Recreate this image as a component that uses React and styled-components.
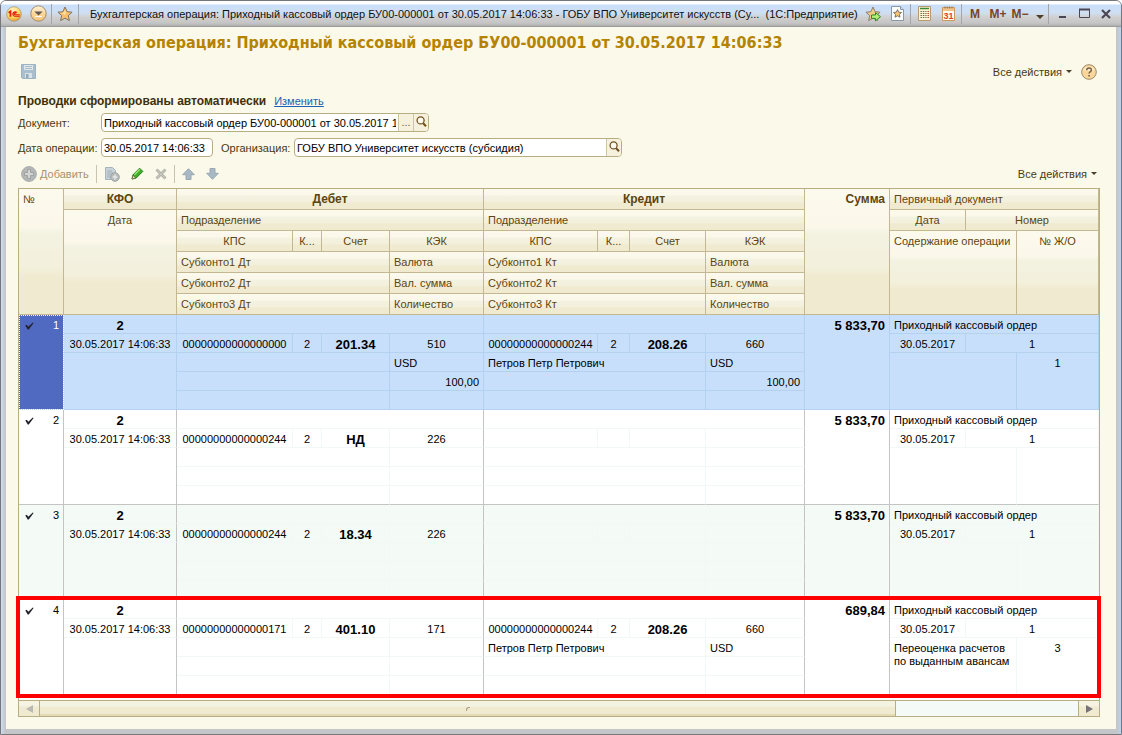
import React from 'react'
import styled, { createGlobalStyle, ThemeProvider } from 'styled-components'

const theme = {
  page: '#fbf9ea',
  border: '#b9ad84',
  headerLine: '#c3b891',
  headerText: '#5c4510',
  label: '#4a3a10',
  title: '#b58300',
  groupLine: '#c4c4c4',
  cellLine: '#f1f8f6',
  selected: '#c8dffb',
  selectedLine: '#b4d2f0',
  zebra: '#f4faf6',
  cursor: '#5069c1'
}

const columns = [45, 113, 116, 29, 68, 94, 114, 32, 76, 99, 85, 76, 51, 82]

const records = [
  {
    id: 1,
    debit: { kps: '00000000000000000', k: '2', account: '201.34', kek: '510', currency: 'USD', amount: '100,00' },
    credit: {
      kps: '00000000000000244',
      k: '2',
      account: '208.26',
      kek: '660',
      subconto: 'Петров Петр Петрович',
      currency: 'USD',
      amount: '100,00'
    },
    sum: '5 833,70',
    journal: '1'
  },
  {
    id: 2,
    debit: { kps: '00000000000000244', k: '2', account: 'НД', kek: '226' },
    credit: {},
    sum: '5 833,70'
  },
  {
    id: 3,
    debit: { kps: '00000000000000244', k: '2', account: '18.34', kek: '226' },
    credit: {},
    sum: '5 833,70'
  },
  {
    id: 4,
    debit: { kps: '00000000000000171', k: '2', account: '401.10', kek: '171' },
    credit: {
      kps: '00000000000000244',
      k: '2',
      account: '208.26',
      kek: '660',
      subconto: 'Петров Петр Петрович',
      currency: 'USD'
    },
    sum: '689,84',
    content: 'Переоценка расчетов по выданным авансам',
    journal: '3'
  }
]

/* ---------- icons ---------- */

const starPath = 'M8 1l2.1 4.7 5 .5-3.8 3.4 1.1 5L8 12.1l-4.4 2.5 1.1-5L.9 6.2l5-.5z'

const LogoIcon = () => (
  <svg width='16' height='16' viewBox='0 0 16 16'>
    <defs>
      <radialGradient id='logo' cx='0.4' cy='0.25' r='0.8'>
        <stop offset='0' stopColor='#fff6c8' />
        <stop offset='0.6' stopColor='#fbd75c' />
        <stop offset='1' stopColor='#e0912c' />
      </radialGradient>
    </defs>
    <circle cx='8' cy='8' r='7.3' fill='url(#logo)' stroke='#a99a84' strokeWidth='0.8' />
    <path d='M2.6 6.8l1.9-1.4v5.4' fill='none' stroke='#e01b10' strokeWidth='1.7' />
    <path
      d='M10.9 6.6a2.3 2.3 0 1 0-2 3.7h4.8M9.9 7.8a.9.9 0 1 0-1 .9h4.8'
      fill='none'
      stroke='#e01b10'
      strokeWidth='1.1'
    />
  </svg>
)

const MenuIcon = () => (
  <svg width='17' height='17' viewBox='0 0 17 17'>
    <defs>
      <linearGradient id='menu' x1='0' y1='0' x2='0' y2='1'>
        <stop offset='0' stopColor='#fff4dc' />
        <stop offset='0.5' stopColor='#fbd79a' />
        <stop offset='1' stopColor='#f5c478' />
      </linearGradient>
    </defs>
    <circle cx='8.5' cy='8.5' r='7.7' fill='url(#menu)' stroke='#a08a6c' />
    <path d='M4.3 6.5h8.4L8.5 10.5z' fill='#5e5a5a' />
    <path d='M5 11.5h7' stroke='#fff' />
  </svg>
)

const StarIcon = () => (
  <svg width='16' height='16' viewBox='0 0 16 16'>
    <path d={starPath} fill='#fbbf68' stroke='#7d7468' strokeWidth='1' />
    <path d='M8 3.6l1.3 3L8 9 4.4 7l2.5-.4z' fill='#fddca0' />
  </svg>
)

const StarAddIcon = () => (
  <svg width='17' height='16' viewBox='0 0 17 16'>
    <path d={starPath} fill='#f3c889' stroke='#8a7f72' strokeWidth='1' />
    <path d='M6.5 9h4V6.6l5 4.1-5 4.1v-2.4h-4z' fill='#b5ee78' stroke='#2c8a1e' />
  </svg>
)

const PageStarIcon = () => (
  <svg width='13' height='15' viewBox='0 0 13 15'>
    <path d='M.5.5h9l3 3v11H.5z' fill='#fbfdff' stroke='#8799a8' />
    <path d='M9.5.5v3h3' fill='#dbe4ec' stroke='#8799a8' />
    <path
      d='M6.5 3.6l1.2 2.6 2.8.3-2.1 1.9.6 2.8-2.5-1.4L4 11.2l.6-2.8-2.1-1.9 2.8-.3z'
      fill='#f9c774'
      stroke='#655c50'
      strokeWidth='0.8'
    />
  </svg>
)

const CalculatorIcon = () => (
  <svg width='13' height='15' viewBox='0 0 13 15'>
    <path d='M.5.5h12v14H.5z' fill='#fff3d8' stroke='#b89a70' />
    <path d='M2 2.5h9' stroke='#3a8a34' strokeWidth='1.6' />
    <path d='M2.5 5.5h6M2.5 7.5h6M2.5 9.5h6M2.5 11.5h6' stroke='#5a6a3a' strokeDasharray='1.4 1' />
    <path d='M9.5 5.5h1.5M9.5 7.5h1.5M9.5 9.5h1.5M9.5 11.5h1.5' stroke='#c0502a' />
  </svg>
)

const CalendarIcon = () => (
  <svg width='13' height='15' viewBox='0 0 13 15'>
    <path d='M.5 1.5h12v13H.5z' fill='#fffdf6' stroke='#c79a62' />
    <path d='M1 2h11v3H1z' fill='#f3c48a' />
    <path d='M3 .5v2M5.3.5v2M7.6.5v2M10 .5v2' stroke='#99704a' />
    <text
      x='6.5'
      y='13'
      textAnchor='middle'
      fontSize='9'
      fontWeight='bold'
      fontFamily='Liberation Sans, sans-serif'
      fill='#dc4226'
    >
      31
    </text>
  </svg>
)

const SaveIcon = () => (
  <svg width='15' height='15' viewBox='0 0 15 15'>
    <path d='M.5.5h14v14h-13l-1-1z' fill='#a9bfce' stroke='#9db3c2' />
    <path d='M3 1h9v5H3z' fill='#dfe7ea' />
    <path d='M4 2.5h7M4 4.5h7' stroke='#a9bfce' />
    <path d='M4 9h7v5H4z' fill='#d9e2e6' />
    <path d='M5 10h2.5v4H5z' fill='#8fa9ba' />
  </svg>
)

const HelpIcon = () => (
  <svg width='16' height='16' viewBox='0 0 16 16'>
    <circle cx='8' cy='8' r='7.3' fill='#fbd69a' stroke='#9c8a6c' />
    <path d='M2.5 6a6 6 0 0 1 11 0c-3 1.5-8 1.5-11 0z' fill='#fdebc8' />
    <path d='M5.7 6.2c0-3 4.7-3 4.7-.3 0 1.8-2.3 1.6-2.3 3.7' fill='none' stroke='#7a6244' strokeWidth='1.5' />
    <path d='M7.2 11h1.7v1.6H7.2z' fill='#7a6244' />
  </svg>
)

const SearchIcon = () => (
  <svg width='11' height='12' viewBox='0 0 11 12'>
    <circle cx='4.6' cy='4.4' r='3.5' fill='#fdfaf0' stroke='#705020' strokeWidth='1.3' />
    <path d='M7.2 7.2l2.8 3' stroke='#705020' strokeWidth='2' />
  </svg>
)

const AddIcon = () => (
  <svg width='16' height='16' viewBox='0 0 16 16'>
    <circle cx='8' cy='8' r='7.4' fill='#b4b7b6' stroke='#a9adad' />
    <path d='M6.5 3.5h3v3h3v3h-3v3h-3v-3h-3v-3h3z' fill='#d2d5d4' stroke='#969b9b' strokeWidth='0.8' />
  </svg>
)

const CopyIcon = () => (
  <svg width='16' height='16' viewBox='0 0 16 16'>
    <path d='M1.5 1.5h7l3 3v9h-10z' fill='#c8d2d8' stroke='#a6b4be' />
    <path d='M3 5h5M3 7h6M3 9h4M3 11h4' stroke='#a0afba' />
    <circle cx='11' cy='11' r='4.3' fill='#b8bcbb' stroke='#9fa4a4' />
    <path d='M11 8.6v4.8M8.6 11h4.8' stroke='#e3e6e5' strokeWidth='1.6' />
  </svg>
)

const EditIcon = () => (
  <svg width='13' height='13' viewBox='0 0 13 13'>
    <path d='M1 12l1-4.2L8.6 1.2l3.2 3.2L5.2 11z' fill='#43b02c' stroke='#207814' />
    <path d='M3.5 7.6l5.3-5.3' stroke='#a5e87f' strokeWidth='1.3' />
    <path d='M1 12l1-3.6L4.7 11z' fill='#f5e2b6' stroke='#5c5134' strokeWidth='0.6' />
  </svg>
)

const DeleteIcon = () => (
  <svg width='12' height='12' viewBox='0 0 12 12'>
    <path d='M1.5 1.5l9 9M10.5 1.5l-9 9' stroke='#b5b5ac' strokeWidth='3' />
    <path d='M2 2l8 8M10 2l-8 8' stroke='#c8c8be' />
  </svg>
)

const ArrowIcon = ({ down }) => (
  <svg width='13' height='12' viewBox='0 0 13 12'>
    <path
      d={down ? 'M4 .5h5v4.8h3.3L6.5 11.3.7 5.3H4z' : 'M4 11.5h5V6.7h3.3L6.5.7.7 6.7H4z'}
      fill='#a8b8c4'
      stroke='#98a8b4'
    />
  </svg>
)

const TickIcon = () => (
  <svg width='9' height='8' viewBox='0 0 9 8'>
    <path d='M.3 3.4l1.5-.6 1.5 1.9L7.8.5l.8.5-4.8 6.4H2.7z' fill='#23232b' />
  </svg>
)

const MinimizeIcon = () => (
  <svg width='13' height='11' viewBox='0 0 13 11'>
    <path d='M3 9h7' stroke='#4c4654' strokeWidth='2' />
  </svg>
)

const MaximizeIcon = () => (
  <svg width='11' height='11' viewBox='0 0 11 11'>
    <path d='M.5 1.5h10v8H.5z' fill='none' stroke='#4c4654' />
    <path d='M0 1.5h11' stroke='#4c4654' strokeWidth='2' />
  </svg>
)

const CloseIcon = () => (
  <svg width='10' height='10' viewBox='0 0 10 10'>
    <path d='M1 1l8 8M9 1L1 9' stroke='#4c4654' strokeWidth='2.2' />
  </svg>
)

const ScrollArrow = ({ right }) => (
  <svg width='7' height='8' viewBox='0 0 7 8'>
    <path d={right ? 'M0 0l7 4-7 4z' : 'M7 0L0 4l7 4z'} fill={right ? '#77737a' : '#bab8b2'} />
  </svg>
)

/* ---------- page ---------- */

const App = () => (
  <ThemeProvider theme={theme}>
    <GlobalStyle />
    <Window>
      <TitleBar />
      <Content>
        <Heading>Бухгалтерская операция: Приходный кассовый ордер БУ00-000001 от 30.05.2017 14:06:33</Heading>

        <CommandBar>
          <IconButton type='button' aria-label='Сохранить'>
            <SaveIcon />
          </IconButton>
          <Spacer />
          <AllActions />
          <IconButton type='button' aria-label='Справка'>
            <HelpIcon />
          </IconButton>
        </CommandBar>

        <Notice>
          <strong>Проводки сформированы автоматически</strong>
          <a href='#edit'>Изменить</a>
        </Notice>

        <FieldRow>
          <Label htmlFor='document'>Документ:</Label>
          <Field>
            <input id='document' defaultValue='Приходный кассовый ордер БУ00-000001 от 30.05.2017 1' />
            <FieldButton type='button' aria-label='Выбрать'>
              ...
            </FieldButton>
            <FieldButton type='button' aria-label='Открыть'>
              <SearchIcon />
            </FieldButton>
          </Field>
        </FieldRow>

        <FieldRow>
          <Label htmlFor='date'>Дата операции:</Label>
          <Field $width='112px'>
            <input id='date' defaultValue='30.05.2017 14:06:33' />
          </Field>
          <Label htmlFor='organization' $inner>
            Организация:
          </Label>
          <Field>
            <input id='organization' defaultValue='ГОБУ ВПО Университет искусств (субсидия)' />
            <FieldButton type='button' aria-label='Открыть'>
              <SearchIcon />
            </FieldButton>
          </Field>
        </FieldRow>

        <Toolbar>
          <IconButton type='button' disabled>
            <AddIcon />
            Добавить
          </IconButton>
          <Divider />
          <IconButton type='button' aria-label='Скопировать' disabled>
            <CopyIcon />
          </IconButton>
          <IconButton type='button' aria-label='Изменить'>
            <EditIcon />
          </IconButton>
          <IconButton type='button' aria-label='Удалить' disabled>
            <DeleteIcon />
          </IconButton>
          <Divider />
          <IconButton type='button' aria-label='Переместить вверх' disabled>
            <ArrowIcon />
          </IconButton>
          <IconButton type='button' aria-label='Переместить вниз' disabled>
            <ArrowIcon down />
          </IconButton>
          <Spacer />
          <AllActions />
        </Toolbar>

        <Grid>
          <Table>
            <colgroup>
              {columns.map((width, i) => (
                <col key={i} width={width} />
              ))}
            </colgroup>
            <TableHead />
            {records.map(record => (
              <Record key={record.id} record={record} selected={record.id === 1} />
            ))}
          </Table>
          <Highlight />
          <Scrollbar>
            <ScrollButton type='button' aria-label='Влево'>
              <ScrollArrow />
            </ScrollButton>
            <Track>
              <Thumb>
                <i />
              </Thumb>
            </Track>
            <ScrollButton type='button' aria-label='Вправо'>
              <ScrollArrow right />
            </ScrollButton>
          </Scrollbar>
        </Grid>
      </Content>
    </Window>
  </ThemeProvider>
)

const TitleBar = () => (
  <Bar>
    <BarButton $width='24px' aria-label='1С'>
      <LogoIcon />
    </BarButton>
    <BarButton $width='24px' aria-label='Главное меню'>
      <MenuIcon />
    </BarButton>
    <BarDivider />
    <BarButton $width='24px' aria-label='Избранное'>
      <StarIcon />
    </BarButton>
    <BarDivider />
    <Caption>
      Бухгалтерская операция: Приходный кассовый ордер БУ00-000001 от 30.05.2017 14:06:33 - ГОБУ ВПО Университет
      искусств (Су...{'\u00a0 '}(1С:Предприятие)
    </Caption>
    <BarButton $width='24px' aria-label='Добавить в избранное'>
      <StarAddIcon />
    </BarButton>
    <BarButton $width='24px' aria-label='История'>
      <PageStarIcon />
    </BarButton>
    <BarDivider />
    <BarButton $width='24px' aria-label='Калькулятор'>
      <CalculatorIcon />
    </BarButton>
    <BarButton $width='24px' aria-label='Календарь'>
      <CalendarIcon />
    </BarButton>
    <BarDivider />
    <BarButton $width='24px'>M</BarButton>
    <BarButton $width='22px'>M+</BarButton>
    <BarButton $width='22px'>M−</BarButton>
    <BarButton $width='16px' $low aria-label='Ещё'>
      <Caret $wide />
    </BarButton>
    <BarDivider />
    <BarButton $width='24px' aria-label='Свернуть'>
      <MinimizeIcon />
    </BarButton>
    <BarButton $width='20px' aria-label='Развернуть'>
      <MaximizeIcon />
    </BarButton>
    <BarButton $width='24px' aria-label='Закрыть'>
      <CloseIcon />
    </BarButton>
  </Bar>
)

const AllActions = () => (
  <IconButton type='button'>
    Все действия
    <Caret />
  </IconButton>
)

const TableHead = () => (
  <thead>
    <tr>
      <Th rowSpan={6}>№</Th>
      <Th $align='center' $bold>
        КФО
      </Th>
      <Th colSpan={4} $align='center' $bold>
        Дебет
      </Th>
      <Th colSpan={4} $align='center' $bold>
        Кредит
      </Th>
      <Th rowSpan={6} $align='right' $bold>
        Сумма
      </Th>
      <Th colSpan={3}>Первичный документ</Th>
    </tr>
    <tr>
      <Th rowSpan={5} $align='center'>
        Дата
      </Th>
      <Th colSpan={4}>Подразделение</Th>
      <Th colSpan={4}>Подразделение</Th>
      <Th $align='center'>Дата</Th>
      <Th colSpan={2} $align='center'>
        Номер
      </Th>
    </tr>
    <tr>
      {['debit', 'credit'].map(side => (
        <React.Fragment key={side}>
          <Th $align='center'>КПС</Th>
          <Th $align='center'>К...</Th>
          <Th $align='center'>Счет</Th>
          <Th $align='center'>КЭК</Th>
        </React.Fragment>
      ))}
      <Th colSpan={2} rowSpan={4}>
        Содержание операции
      </Th>
      <Th rowSpan={4} $align='center'>
        № Ж/О
      </Th>
    </tr>
    {['Валюта', 'Вал. сумма', 'Количество'].map((name, i) => (
      <tr key={name}>
        <Th colSpan={3}>Субконто{i + 1} Дт</Th>
        <Th>{name}</Th>
        <Th colSpan={3}>Субконто{i + 1} Кт</Th>
        <Th>{name}</Th>
      </tr>
    ))}
  </thead>
)

const AccountCells = ({ entry }) => (
  <>
    <Td $align='center'>{entry.kps}</Td>
    <Td $align='center'>{entry.k}</Td>
    <Td $align='center' $bold>
      {entry.account}
    </Td>
    <Td $align='center' $group>
      {entry.kek}
    </Td>
  </>
)

const Record = ({ record, selected }) => {
  const { id, debit, credit, sum, content, journal } = record

  return (
    <Body $selected={selected} $odd={id % 2 === 1 && !selected}>
      <tr>
        <NumberCell rowSpan={5} $group $last>
          <div>
            <TickIcon />
            {id}
          </div>
        </NumberCell>
        <Td $align='center' $bold $group>
          2
        </Td>
        <Td colSpan={4} $group />
        <Td colSpan={4} $group />
        <Td rowSpan={5} $align='right' $bold $group $last>
          {sum}
        </Td>
        <Td colSpan={3}>Приходный кассовый ордер</Td>
      </tr>
      <tr>
        <Td $align='center' $group>
          30.05.2017 14:06:33
        </Td>
        <AccountCells entry={debit} />
        <AccountCells entry={credit} />
        <Td $align='center'>30.05.2017</Td>
        <Td colSpan={2} $align='center'>
          1
        </Td>
      </tr>
      <tr>
        <Td rowSpan={3} $group $last />
        <Td colSpan={3}>{debit.subconto}</Td>
        <Td $group>{debit.currency}</Td>
        <Td colSpan={3}>{credit.subconto}</Td>
        <Td $group>{credit.currency}</Td>
        <Td colSpan={2} rowSpan={3} $last>
          {content}
        </Td>
        <Td rowSpan={3} $align='center' $last>
          {journal}
        </Td>
      </tr>
      <tr>
        <Td colSpan={3} />
        <Td $align='right' $group>
          {debit.amount}
        </Td>
        <Td colSpan={3} />
        <Td $align='right' $group>
          {credit.amount}
        </Td>
      </tr>
      <tr>
        <Td colSpan={3} $last />
        <Td $group $last />
        <Td colSpan={3} $last />
        <Td $group $last />
      </tr>
    </Body>
  )
}

const GlobalStyle = createGlobalStyle`
  * {
    box-sizing: border-box;
  }

  body {
    margin: 0;
    background: #fff;
  }

  body, button, input {
    font-family: 'Liberation Sans', Arial, sans-serif;
    font-size: 11px;
  }

  svg {
    display: block;
    flex: none;
  }
`

const Window = styled.div`
  display: flex;
  flex-direction: column;
  min-height: 100vh;
  border: 1px solid #77777b;
  border-radius: 6px 6px 0 0;
  background: linear-gradient(90deg, #cddff2 0, #c4c6ca 4px, #c4c6ca calc(100% - 4px), #b9d4f2 100%);
  overflow: hidden;
`

const Bar = styled.header`
  display: flex;
  align-items: center;
  height: 26px;
  padding: 0 3px 0 1px;
  border-bottom: 1px solid #9c9c9c;
  background: linear-gradient(#fff 0, #fff 3px, #c9dffa 4px, #cfdff2 12px, #d0d0d0 16px, #c5c5c5 22px, #b0b0b0 100%);
`

const BarButton = styled.button.attrs({ type: 'button' })`
  display: flex;
  align-items: center;
  justify-content: center;
  flex: none;
  width: ${({ $width }) => $width};
  height: 24px;
  padding: ${({ $low }) => ($low ? '6px 0 0' : 0)};
  border: 0;
  background: none;
  font-size: 12px;
  font-weight: bold;
  color: #7a4526;
`

const BarDivider = styled.span`
  width: 1px;
  height: 20px;
  margin: 0 1px;
  background: #a4a6aa;
`

const Caption = styled.div`
  flex: 1;
  padding-left: 10px;
  overflow: hidden;
  white-space: nowrap;
  font-size: 11px;
  color: #111;
`

const Content = styled.main`
  display: flex;
  flex-direction: column;
  flex: 1;
  margin: 0 5px 5px;
  padding: 6px 16px 12px 12px;
  background: ${({ theme }) => theme.page};
  color: ${({ theme }) => theme.label};
`

const Heading = styled.h1`
  margin: 0;
  font-family: 'DejaVu Sans Condensed', 'Noto Sans', sans-serif;
  font-size: 16px;
  line-height: 20px;
  white-space: nowrap;
  color: ${({ theme }) => theme.title};
`

const CommandBar = styled.div`
  display: flex;
  align-items: center;
  gap: 9px;
  height: 37px;
  padding: 0 3px;
`

const Spacer = styled.div`
  flex: 1;
`

const IconButton = styled.button`
  display: flex;
  align-items: center;
  gap: 3px;
  padding: 0;
  border: 0;
  background: none;
  color: ${({ theme, disabled }) => (disabled ? '#a8926a' : theme.label)};
`

const Caret = styled.span`
  margin-left: 1px;
  border: ${({ $wide }) => ($wide ? 4 : 3)}px solid transparent;
  border-top: ${({ $wide }) => ($wide ? 4 : 3)}px solid #4a3f2a;
  border-bottom: 0;
`

const Notice = styled.div`
  display: flex;
  align-items: center;
  gap: 8px;
  height: 23px;
  padding-bottom: 2px;

  strong {
    font-size: 12px;
    color: #40300a;
  }

  a {
    color: #1c5fb4;
  }
`

const FieldRow = styled.div`
  display: flex;
  align-items: center;
  height: 19px;
  margin-bottom: 6px;
`

const Label = styled.label`
  width: ${({ $inner }) => ($inner ? '81px' : '83px')};
  padding-left: ${({ $inner }) => ($inner ? '8px' : 0)};
  white-space: nowrap;
`

const Field = styled.div`
  display: flex;
  width: ${({ $width }) => $width || '328px'};
  height: 19px;
  border: 1px solid ${({ theme }) => theme.border};
  border-radius: 4px;
  background: #fff;
  overflow: hidden;

  input {
    flex: 1;
    min-width: 0;
    padding: 0 2px;
    border: 0;
    background: none;
    color: #000;
    outline: none;
  }
`

const FieldButton = styled.button`
  display: flex;
  align-items: center;
  justify-content: center;
  width: 15px;
  padding: 0 0 1px;
  border: 0;
  border-left: 1px solid #cdc5a3;
  background: #f5f1dc;
  color: #75643c;
`

const Toolbar = styled.div`
  display: flex;
  align-items: center;
  gap: 11px;
  height: 25px;
  padding: 0 3px 4px;
`

const Divider = styled.span`
  width: 1px;
  height: 18px;
  margin: 0 -4px;
  background: #c9c4b0;
`

const Grid = styled.section`
  position: relative;
  display: flex;
  flex-direction: column;
  flex: 1;
  border: 1px solid ${({ theme }) => theme.border};
  background: #fff;
`

const Table = styled.table`
  width: 100%;
  table-layout: fixed;
  border-collapse: separate;
  border-spacing: 0;
  line-height: 13px;
`

const Th = styled.th`
  height: 21px;
  padding: 4px 4px 3px;
  border: 0 solid ${({ theme }) => theme.headerLine};
  border-width: 0 1px 1px 0;
  background: linear-gradient(#fcfaed 0, #fbf8ea 30%, #f3f2e1 36%, #f3f0dc 62%, #f0ebd0 70%, #f0ebd0 100%);
  font-size: ${({ $bold }) => ($bold ? '12px' : '11px')};
  font-weight: ${({ $bold }) => ($bold ? 'bold' : 'normal')};
  text-align: ${({ $align }) => $align || 'left'};
  vertical-align: top;
  white-space: nowrap;
  color: ${({ theme }) => theme.headerText};
`

const Td = styled.td`
  height: 19px;
  padding: 4px 4px 1px;
  border: 0 solid var(--line);
  border-width: 0 1px 1px 0;
  border-right-color: ${({ $group }) => ($group ? 'var(--group)' : 'var(--line)')};
  border-bottom-color: ${({ $last }) => ($last ? 'var(--group)' : 'var(--line)')};
  font-size: ${({ $bold }) => ($bold ? '13px' : '11px')};
  font-weight: ${({ $bold }) => ($bold ? 'bold' : 'normal')};
  text-align: ${({ $align }) => $align || 'left'};
  vertical-align: top;
  color: #000;
`

const NumberCell = styled(Td)`
  div {
    display: flex;
    align-items: center;
    justify-content: space-between;
    padding-left: 2px;
  }
`

const Body = styled.tbody`
  --line: ${({ theme, $selected }) => ($selected ? theme.selectedLine : theme.cellLine)};
  --group: ${({ theme, $selected }) => ($selected ? theme.selectedLine : theme.groupLine)};
  background: ${({ theme, $selected, $odd }) => ($selected ? theme.selected : $odd ? theme.zebra : '#fff')};

  ${NumberCell} {
    ${({ theme, $selected }) =>
      $selected &&
      `
      background: ${theme.cursor};
      color: #fff;
      outline: 1px dotted #fff;
      outline-offset: -1px;
    `}
  }
`

/* red frame over the last record */
const Highlight = styled.div`
  position: absolute;
  right: -2px;
  bottom: 18px;
  left: -3px;
  height: 102px;
  border: 4px solid #f00;
  pointer-events: none;
`

const Scrollbar = styled.div`
  display: flex;
  height: 16px;
  margin-top: auto;
  border-top: 1px solid ${({ theme }) => theme.border};
`

const ScrollButton = styled.button`
  display: flex;
  align-items: center;
  justify-content: center;
  width: 20px;
  padding: 0;
  border: 0;
  background: linear-gradient(#f6f3e2 30%, #f0ebd0 40%);
`

const Track = styled.div`
  flex: 1;
  border: 0 solid ${({ theme }) => theme.border};
  border-width: 0 1px;
  background: #f4faf6;
`

const Thumb = styled.div`
  display: flex;
  align-items: center;
  justify-content: center;
  width: 82.5%;
  height: 100%;
  border-right: 1px solid ${({ theme }) => theme.border};
  background: linear-gradient(#f4f2e1 35%, #f0ebd0 40%, #f0ebd0 85%, #e3dab6 90%);

  i {
    width: 4px;
    height: 4px;
    border: 1px solid #aaa088;
    border-width: 1px 0 0 1px;
    border-radius: 3px 0 0 0;
  }
`

export default App
